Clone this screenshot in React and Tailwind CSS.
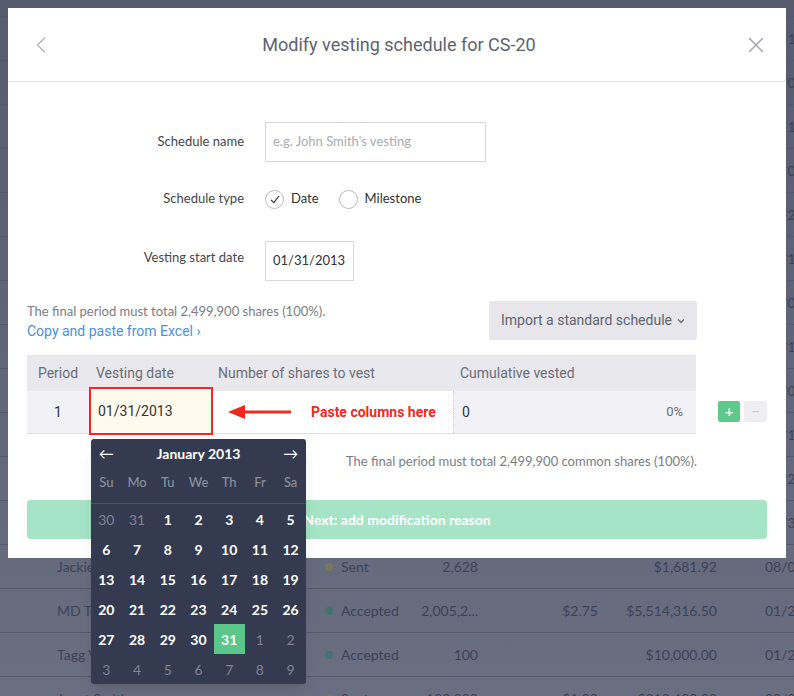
import React from 'react';

// background rows (dimmed table behind the modal)
const bgRows = [
  { name: 'Vesting summary', status: 'Accepted', shares: '12,500', price: '', total: '$1,250.00', date: '01/15/2014' },
  { name: 'Board approval by', status: 'Accepted', shares: '40,000', price: '$0.10', total: '$4,000.00', date: '02/01/2014' },
  { name: 'Alex Rivera', status: 'Accepted', shares: '75,000', price: '$0.25', total: '$18,750.00', date: '03/12/2014' },
  { name: 'Brian Lee', status: 'Sent', shares: '10,000', price: '', total: '$2,500.00', date: '04/03/2014' },
  { name: 'Carla Gomez', status: 'Accepted', shares: '250,000', price: '$0.50', total: '$125,000.00', date: '05/20/2014' },
  { name: 'Dana White', status: 'Accepted', shares: '5,000', price: '', total: '$500.00', date: '06/11/2014' },
  { name: 'Eric Novak', status: 'Sent', shares: '18,000', price: '$1.00', total: '$18,000.00', date: '07/08/2014' },
  { name: 'Fiona Blake', status: 'Accepted', shares: '2,400', price: '', total: '$2,400.00', date: '08/19/2014' },
  { name: 'George Hall', status: 'Accepted', shares: '60,000', price: '$1.50', total: '$90,000.00', date: '09/02/2014' },
  { name: 'Helen Park', status: 'Sent', shares: '1,200', price: '', total: '$1,800.00', date: '10/14/2014' },
  { name: 'Ian Moore', status: 'Accepted', shares: '33,333', price: '$2.00', total: '$66,666.00', date: '11/25/2014' },
  { name: 'Jessica Tran', status: 'Accepted', shares: '9,500', price: '', total: '$9,500.00', date: '12/30/2014' },
  { name: 'Jackie Chen', status: 'Sent', shares: '2,628', price: '', total: '$1,681.92', date: '08/04/2015' },
  { name: 'MD Technologies', status: 'Accepted', shares: '2,005,2...', price: '$2.75', total: '$5,514,316.50', date: '01/22/2016' },
  { name: 'Tagg Ventures', status: 'Accepted', shares: '100', price: '', total: '$10,000.00', date: '01/22/2016' },
  { name: 'Janet Smith', status: 'Sent', shares: '100,000', price: '$1.00', total: '$219,400.00', date: '09/01/2016' },
];

const weeks = [
  [[30, 1], [31, 1], [1], [2], [3], [4], [5]],
  [[6], [7], [8], [9], [10], [11], [12]],
  [[13], [14], [15], [16], [17], [18], [19]],
  [[20], [21], [22], [23], [24], [25], [26]],
  [[27], [28], [29], [30], [31, 0, 1], [1, 1], [2, 1]],
  [[3, 1], [4, 1], [5, 1], [6, 1], [7, 1], [8, 1], [9, 1]],
];

const narrow = "font-['Liberation_Sans_Narrow','Roboto',sans-serif]";

function Calendar() {
  return (
    <div className="absolute left-0 top-[calc(100%+6px)] z-20 w-[215px] rounded-[3px] bg-[#343a4f] shadow-lg font-['Lato',sans-serif]">
      <div className="grid h-[29px] grid-cols-7 items-center text-white">
        <div className="text-center text-[15px]">←</div>
        <div className="col-span-5 text-center text-[14px] font-bold">January 2013</div>
        <div className="text-center text-[15px]">→</div>
      </div>
      <div className="grid h-[30px] grid-cols-7 items-center text-center text-[13px] font-medium text-[#8a8fa0]">
        {['Su', 'Mo', 'Tu', 'We', 'Th', 'Fr', 'Sa'].map(d => (
          <div key={d}>{d}</div>
        ))}
      </div>
      <div className="h-[6px] border-b border-[#4a5066]" />
      {weeks.map((w, i) => (
        <div key={i} className="grid h-[30px] grid-cols-7">
          {w.map(([n, out, sel], j) => (
            <div
              key={j}
              className={
                sel
                  ? 'flex items-center justify-center bg-[#5bc68a] text-[14px] font-bold text-white'
                  : out
                  ? 'flex items-center justify-center text-[14px] text-[#7f8497]'
                  : 'flex items-center justify-center text-[14px] font-bold text-white'
              }
            >
              {n}
            </div>
          ))}
        </div>
      ))}
    </div>
  );
}

export default function App() {
  return (
    <div className="relative h-[696px] w-full overflow-hidden bg-gradient-to-b from-[#575b6d] to-[#6a6e81] font-['Lato',sans-serif]">
      {/* dimmed page behind the dialog */}
      <div className="flex flex-col text-[14px] text-[#3d4257]">
        <div className="h-[17px] border-b border-[#555a6b]" />
        {bgRows.map((r, i) => (
          <div key={i} className="flex h-[44px] shrink-0 items-center border-b border-[#555a6b] whitespace-nowrap">
            <div className="w-[322px] shrink-0 truncate pl-[57px]">{r.name}</div>
            <div className="flex w-[78px] shrink-0 items-center gap-[8px] pl-[3px]">
              <span className={r.status === 'Sent' ? 'h-[8px] w-[8px] rounded-full bg-[#7a7760]' : 'h-[8px] w-[8px] rounded-full bg-[#47726f]'} />
              {r.status}
            </div>
            <div className="w-[78px] shrink-0 text-right">{r.shares}</div>
            <div className="w-[120px] shrink-0 text-right">{r.price}</div>
            <div className="w-[119px] shrink-0 text-right">{r.total}</div>
            <div className="shrink-0 pl-[48px]">{r.date}</div>
          </div>
        ))}
      </div>

      {/* dialog */}
      <div className="absolute left-[8px] top-[8px] z-10 w-[778px] bg-white">
        <div className="flex h-[74px] items-center border-b border-[#e3e3e9] pl-[26px] pr-[22px]">
          <div className="w-[60px]">
            <svg width="12" height="18" viewBox="0 0 12 18" className="ml-[1px]">
              <polyline points="10,1.5 2.5,9 10,16.5" fill="none" stroke="#b3b6bf" strokeWidth="1.4" />
            </svg>
          </div>
          <h1 className={`${narrow} flex-1 text-center text-[18px] text-[#60636e]`}>Modify vesting schedule for CS-20</h1>
          <div className="flex w-[60px] justify-end">
            <svg width="16" height="16" viewBox="0 0 16 16">
              <path d="M1 1 L15 15 M15 1 L1 15" stroke="#a3a6ae" strokeWidth="1.5" />
            </svg>
          </div>
        </div>

        <div className="px-[19px] pb-[19px] pt-[40px]">
          {/* form */}
          <div className="flex h-[40px] items-center">
            <div className="w-[217px] text-right text-[13px] text-[#43464e]">Schedule name</div>
            <div className="ml-[21px] flex h-[40px] w-[221px] items-center border border-[#d7d7dc] px-[7px] text-[13px] text-[#a9abb2]">
              e.g. John Smith's vesting
            </div>
          </div>
          <div className="mt-[17px] flex h-[40px] items-center">
            <div className="w-[217px] text-right text-[13px] text-[#43464e]">Schedule type</div>
            <div className="ml-[21px] flex items-center text-[13px] text-[#2f3238]">
              <span className="flex h-[19px] w-[19px] items-center justify-center rounded-full border border-[#b9bbc1]">
                <svg width="10" height="9" viewBox="0 0 10 9">
                  <polyline points="1,4.8 3.8,7.6 9,1" fill="none" stroke="#2f3238" strokeWidth="1.2" />
                </svg>
              </span>
              <span className="ml-[7px]">Date</span>
              <span className="ml-[20px] h-[19px] w-[19px] rounded-full border border-[#b9bbc1]" />
              <span className="ml-[7px]">Milestone</span>
            </div>
          </div>
          <div className="mt-[22px] flex h-[40px] items-center">
            <div className="-mt-[6px] w-[217px] text-right text-[13px] text-[#43464e]">Vesting start date</div>
            <div className="ml-[21px] flex h-[40px] w-[89px] items-center border border-[#d7d7dc] px-[7px] text-[13px] text-[#2f3238]">
              01/31/2013
            </div>
          </div>

          {/* info + import */}
          <div className="mt-[20px] flex w-[670px] items-start justify-between">
            <div className="text-[13px] leading-[20px]">
              <div className="text-[#7a7d86]">The final period must total 2,499,900 shares (100%).</div>
              <div className={`${narrow} text-[14px] text-[#4a90e2]`}>Copy and paste from Excel ›</div>
            </div>
            <button className={`${narrow} flex h-[39px] w-[208px] items-center justify-center gap-[5px] rounded-[3px] bg-[#e6e6eb] text-[14px] text-[#62656e]`}>
              Import a standard schedule
              <svg width="8" height="6" viewBox="0 0 8 6">
                <polyline points="1,1.5 4,4.5 7,1.5" fill="none" stroke="#62656e" strokeWidth="1.2" />
              </svg>
            </button>
          </div>

          {/* schedule table */}
          <div className="mt-[14px] flex items-start">
            <div className={`${narrow} w-[670px] text-[14px]`}>
              <div className="flex h-[36px] items-center bg-[#e8e8ed] text-[#6b6e77]">
                <div className="w-[62px] text-center">Period</div>
                <div className="w-[124px] pl-[7px]">Vesting date</div>
                <div className="w-[240px] pl-[5px]">Number of shares to vest</div>
                <div className="pl-[7px]">Cumulative vested</div>
              </div>
              <div className="flex h-[43px] items-stretch border-b border-[#dedee4] bg-[#f2f2f6] text-[#2f3238]">
                <div className="flex w-[62px] items-center justify-center">1</div>
                <div className="relative w-[124px]">
                  <div className="absolute -bottom-[2px] left-0 right-0 -top-[4px] flex items-center border-2 border-[#ee2a1e] bg-[#fffaee] pl-[7px]">
                    01/31/2013
                    <Calendar />
                  </div>
                </div>
                <div className="flex w-[240px] items-center bg-white">
                  <svg width="64" height="16" viewBox="0 0 64 16" className="ml-[15px]">
                    <polygon points="0,8 17,1 17,15" fill="#ee2a1e" />
                    <rect x="16" y="6.5" width="47" height="3" fill="#ee2a1e" />
                  </svg>
                  <span className="ml-[19px] font-bold text-[#ee2a1e]">Paste columns here</span>
                </div>
                <div className="flex flex-1 items-center justify-between border-l border-dotted border-[#c9c9cf] pl-[8px] pr-[13px]">
                  <span>0</span>
                  <span className="text-[13px] text-[#6b6e77]">0%</span>
                </div>
              </div>
            </div>
            <div className="ml-[22px] mt-[46px] flex gap-[4px]">
              <div className="flex h-[21px] w-[22px] items-center justify-center rounded-[2px] bg-[#5dca8b] text-[15px] leading-none text-white">+</div>
              <div className="flex h-[21px] w-[23px] items-center justify-center rounded-[2px] bg-[#efeff2] text-[15px] leading-none text-[#c6c6cd]">−</div>
            </div>
          </div>

          <div className="mt-[17px] w-[670px] text-right text-[13px] leading-[20px] text-[#7a7d86]">
            The final period must total 2,499,900 common shares (100%).
          </div>

          <button className="mt-[29px] flex h-[39px] w-full items-center justify-center rounded-[4px] bg-[#a5e4c6] text-[14px] font-bold text-white">
            Next: add modification reason
          </button>
        </div>
      </div>
    </div>
  );
}
